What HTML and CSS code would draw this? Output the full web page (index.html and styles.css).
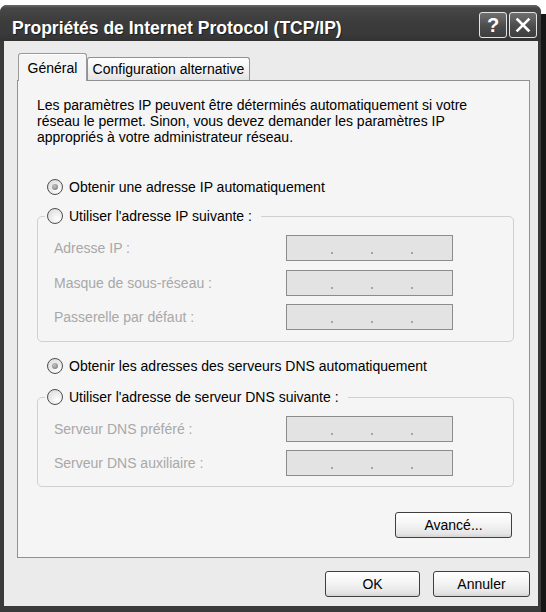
FILE: index.html
```html
<!DOCTYPE html>
<html lang="fr">
<head>
<meta charset="utf-8">
<title>Propriétés de Internet Protocol (TCP/IP)</title>
<link rel="stylesheet" href="styles.css">
</head>
<body>
<div class="screen">
  <div class="window">
    <div class="titlebar">
      <div class="title">Propriétés de Internet Protocol (TCP/IP)</div>
      <div class="caption-buttons">
        <div class="cap-btn help">?</div>
        <div class="cap-btn close">
          <svg width="16" height="16" viewBox="0 0 16 16"><path d="M2.5 2.5 L13.5 13.5 M13.5 2.5 L2.5 13.5" stroke="#fff" stroke-width="2.6" stroke-linecap="square" fill="none"/></svg>
        </div>
      </div>
    </div>
    <div class="client">
      <div class="tabs">
        <div class="tab active">Général</div>
        <div class="tab">Configuration alternative</div>
      </div>
      <div class="panel">
        <p class="intro">Les paramètres IP peuvent être déterminés automatiquement si votre<br>réseau le permet. Sinon, vous devez demander les paramètres IP<br>appropriés à votre administrateur réseau.</p>

        <div class="radio-row ip-auto"><span class="radio checked"></span><span>Obtenir une adresse IP automatiquement</span></div>
        <fieldset class="group g1">
          <legend><span class="radio-row"><span class="radio"></span><span>Utiliser l'adresse IP suivante :</span></span></legend>
          <div class="fields">
            <div class="label">Adresse IP :</div>
            <div class="ip"><span class="dot"></span><span class="dot"></span><span class="dot"></span></div>
            <div class="label">Masque de sous-réseau :</div>
            <div class="ip"><span class="dot"></span><span class="dot"></span><span class="dot"></span></div>
            <div class="label">Passerelle par défaut :</div>
            <div class="ip"><span class="dot"></span><span class="dot"></span><span class="dot"></span></div>
          </div>
        </fieldset>

        <div class="radio-row dns-auto"><span class="radio checked"></span><span>Obtenir les adresses des serveurs DNS automatiquement</span></div>
        <fieldset class="group g2">
          <legend><span class="radio-row"><span class="radio"></span><span>Utiliser l'adresse de serveur DNS suivante :</span></span></legend>
          <div class="fields">
            <div class="label">Serveur DNS préféré :</div>
            <div class="ip"><span class="dot"></span><span class="dot"></span><span class="dot"></span></div>
            <div class="label">Serveur DNS auxiliaire :</div>
            <div class="ip"><span class="dot"></span><span class="dot"></span><span class="dot"></span></div>
          </div>
        </fieldset>

        <div class="advanced-row"><button class="btn btn-adv">Avancé...</button></div>
      </div>
      <div class="actions">
        <button class="btn btn-ok">OK</button>
        <button class="btn btn-cancel">Annuler</button>
      </div>
    </div>
  </div>
  <div class="strip"></div>
</div>
</body>
</html>
```

FILE: styles.css
```css
html, body {
  margin: 0;
  padding: 0;
  background: #ffffff;
}

body {
  font-family: "Liberation Sans", Arial, sans-serif;
  font-size: 14px;
  color: #000;
}

.screen {
  display: flex;
  width: 546px;
  height: 612px;
  overflow: hidden;
}

.window {
  width: 541px;
  height: 607px;
  margin-top: 5px;
  box-sizing: border-box;
  background: #3a3a3a;
  border-radius: 7px 7px 0 0;
  padding-bottom: 6px;
  display: flex;
  flex-direction: column;
  flex: none;
}

.strip {
  flex: 1;
  margin-top: 14px;
  background: #161616;
}

.titlebar {
  height: 36px;
  flex: none;
  display: flex;
  justify-content: space-between;
  align-items: flex-start;
  padding: 0 4px 0 12px;
  border-radius: 7px 7px 0 0;
  background: linear-gradient(#6a6a6a 0, #474747 3px, #3c3c3c 45%, #393939 80%, #333 100%);
}

.title {
  color: #fff;
  font-weight: bold;
  font-size: 17.5px;
  line-height: 20px;
  padding-top: 13px;
  text-shadow: 1px 1px 0 #1e1e1e;
  white-space: nowrap;
}

.caption-buttons {
  display: flex;
  gap: 2px;
  margin-top: 7px;
}

.cap-btn {
  width: 28px;
  height: 26px;
  box-sizing: border-box;
  border: 1px solid #e4e4e4;
  border-radius: 3px;
  background: linear-gradient(#707070, #4c4c4c 55%, #3e3e3e);
  display: flex;
  align-items: center;
  justify-content: center;
  color: #fff;
  font-weight: bold;
  font-size: 20px;
  line-height: 1;
}

.client {
  flex: 1;
  margin: 0 3px 0 4px;
  padding: 12px 8px 9px 13px;
  background: #ebebeb;
  display: flex;
  flex-direction: column;
}

.tabs {
  display: flex;
  align-items: flex-end;
  height: 27px;
  padding-left: 1px;
  position: relative;
  z-index: 1;
}

.tab {
  width: 163px;
  height: 23px;
  box-sizing: border-box;
  border: 1px solid #919191;
  border-bottom: none;
  border-radius: 3px 3px 0 0;
  background: linear-gradient(#ffffff, #f0f0f0 60%, #e4e4e4);
  display: flex;
  align-items: center;
  justify-content: center;
  white-space: nowrap;
}

.tab.active {
  width: 69px;
  height: 28px;
  margin-bottom: -1px;
  background: #f5f5f5;
  border-color: #9a9a9a;
  box-shadow: inset 0 1px 0 #ffffff;
}

.panel {
  border: 1px solid #919191;
  background: #f5f5f5;
  padding: 16px 15px 19px 19px;
  display: flex;
  flex-direction: column;
}

.intro {
  margin: 0;
  line-height: 16px;
}

.radio-row {
  display: flex;
  align-items: center;
  gap: 6px;
  line-height: 16px;
  white-space: nowrap;
}

.ip-auto {
  margin-top: 34px;
  padding-left: 10px;
}

.dns-auto {
  margin-top: 16px;
  padding-left: 10px;
}

.radio {
  width: 16px;
  height: 16px;
  box-sizing: border-box;
  border-radius: 50%;
  border: 1px solid #4e4e4e;
  background: radial-gradient(circle at 65% 70%, #ffffff 0, #f0f0f0 35%, #d6d6d6 100%);
  flex: none;
  position: relative;
}

.radio.checked::after {
  content: "";
  position: absolute;
  left: 4px;
  top: 4px;
  width: 6px;
  height: 6px;
  border-radius: 50%;
  background: radial-gradient(circle at 40% 35%, #c4c4c4, #707070);
}

.group {
  margin: 12px 0 0;
  padding: 10px 0 11px 16px;
  border: 1px solid #d0d0d0;
  border-radius: 5px;
  min-width: 0;
}

.g2 {
  margin-top: 14px;
  padding-bottom: 10px;
}

.group legend {
  padding: 0 9px 0 2px;
  margin-left: -9px;
  line-height: 18px;
}

.group legend .radio-row {
  line-height: 18px;
}

.fields {
  display: grid;
  grid-template-columns: 232px 167px;
  grid-auto-rows: 26px;
  row-gap: 8.5px;
  align-items: center;
}

.g2 .fields {
  row-gap: 8px;
}

.label {
  color: #a8a8a8;
  white-space: nowrap;
}

.ip {
  height: 26px;
  box-sizing: border-box;
  border: 1px solid #8c8c8c;
  background: #e3e3e3;
  display: flex;
  align-items: flex-end;
  gap: 38px;
  padding: 0 0 6px 44px;
}

.dot {
  width: 2px;
  height: 2px;
  background: #a4a4a4;
}

.advanced-row {
  display: flex;
  justify-content: flex-end;
  margin-top: 25px;
  padding-right: 2px;
}

.btn {
  height: 26px;
  box-sizing: border-box;
  border: 1px solid #3f3f3f;
  border-radius: 3px;
  background: linear-gradient(#ffffff 0%, #f6f6f6 40%, #e6e6e6 85%, #d4d4d4 100%);
  display: flex;
  align-items: center;
  justify-content: center;
  font-family: inherit;
  font-size: 14px;
  color: #000;
  padding: 0;
}

.btn-adv {
  width: 117px;
}

.actions {
  display: flex;
  justify-content: flex-end;
  gap: 13px;
  margin-top: 13px;
}

.btn-ok {
  width: 95px;
}

.btn-cancel {
  width: 97px;
}
```
